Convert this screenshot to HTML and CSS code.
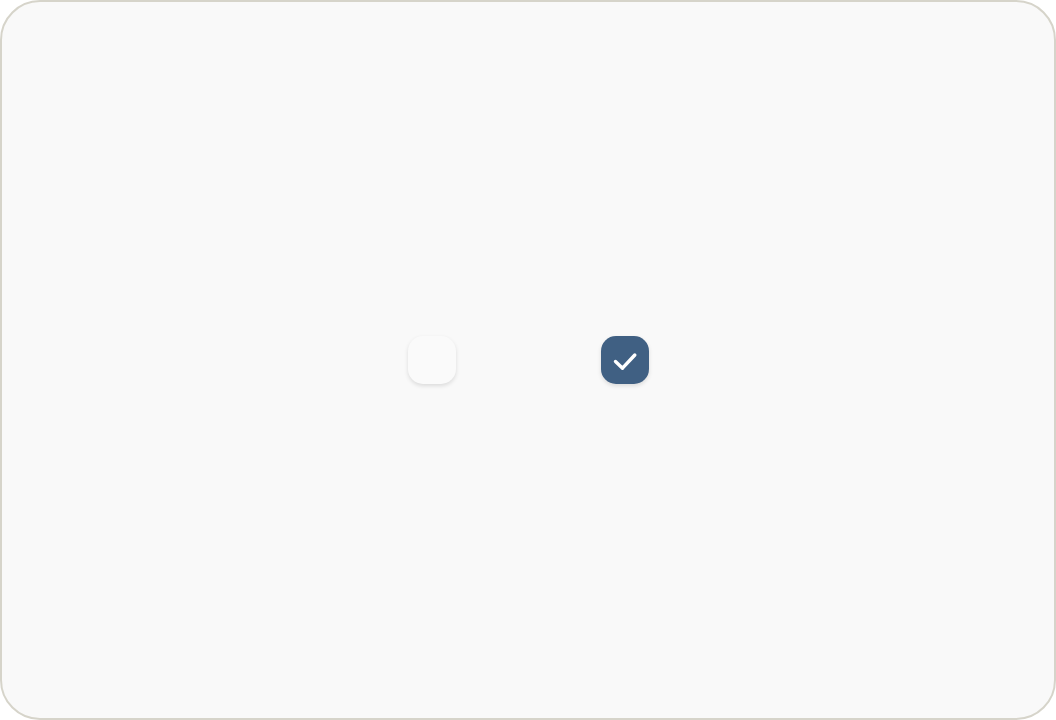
FILE: index.html
```html
<!DOCTYPE html>
<html>
<head>
<meta charset="utf-8">
<link rel="stylesheet" href="styles.css">
</head>
<body>
<div class="frame">
  <div class="row">
    <div class="box"></div>
    <div class="box checked">
      <svg class="check" width="48" height="48" viewBox="0 0 48 48" fill="none" stroke="#ffffff" stroke-width="3.4" stroke-linecap="round" stroke-linejoin="round"><path d="M14.5 25.5L21.5 32.2L33.8 19"/></svg>
    </div>
  </div>
</div>
</body>
</html>
```
FILE: styles.css
```css
html, body { margin: 0; padding: 0; }
body { width: 1056px; height: 720px; background: #ffffff; font-family: "Inter", sans-serif; }
.frame {
  box-sizing: border-box;
  width: 1056px;
  height: 720px;
  border: 2px solid #d6d4ca;
  border-radius: 40px;
  background: #f9f9f9;
  display: flex;
  align-items: center;
  justify-content: center;
}
.row { display: flex; gap: 145px; align-items: center; }
.box {
  width: 48px;
  height: 48px;
  border-radius: 15px;
  background: #fafafa;
  box-shadow: 0 2px 4px rgba(0,0,0,0.12);
  display: flex;
  align-items: center;
  justify-content: center;
}
.box.checked { background: #406083; }
.check { display: block; }
```
